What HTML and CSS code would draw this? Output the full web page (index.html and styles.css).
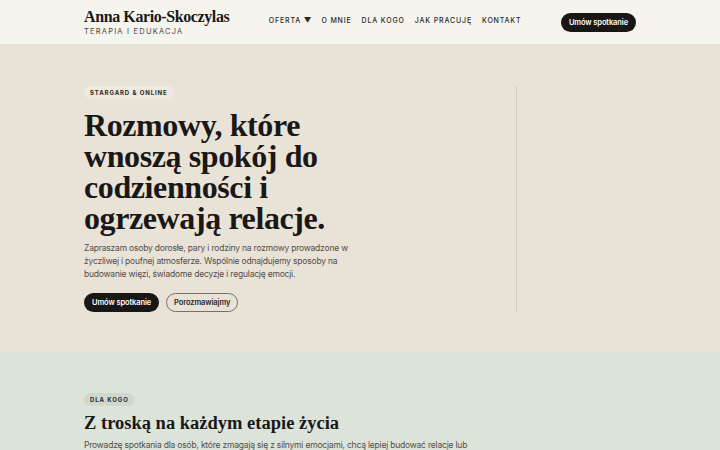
FILE: index.html
```html
<!DOCTYPE html>
<html lang="pl">
<head>
<meta charset="utf-8">
<title>Anna Kario-Skoczylas</title>
<link rel="stylesheet" href="styles.css">
</head>
<body>
<header class="site-header">
  <div class="container header-inner">
    <div class="brand">
      <div class="brand-name">Anna Kario-Skoczylas</div>
      <div class="brand-sub">TERAPIA I EDUKACJA</div>
    </div>
    <nav class="nav">
      <a href="#">OFERTA <span class="caret">▼</span></a>
      <a href="#">O MNIE</a>
      <a href="#">DLA KOGO</a>
      <a href="#">JAK PRACUJĘ</a>
      <a href="#">KONTAKT</a>
    </nav>
    <a class="btn btn-dark" href="#">Umów spotkanie</a>
  </div>
</header>
<section class="hero">
  <div class="container hero-grid">
    <div class="hero-text">
      <span class="badge">STARGARD &amp; ONLINE</span>
      <h1 class="hero-title">Rozmowy, które wnoszą spokój do codzienności i ogrzewają relacje.</h1>
      <p class="hero-lead">Zapraszam osoby dorosłe, pary i rodziny na rozmowy prowadzone w życzliwej i poufnej atmosferze. Wspólnie odnajdujemy sposoby na budowanie więzi, świadome decyzje i regulację emocji.</p>
      <div class="actions">
        <a class="btn btn-dark" href="#">Umów spotkanie</a>
        <a class="btn btn-outline" href="#">Porozmawiajmy</a>
      </div>
    </div>
    <div class="hero-side"></div>
  </div>
</section>
<section class="who">
  <div class="container who-inner">
    <span class="badge badge-green">DLA KOGO</span>
    <h2 class="section-title">Z troską na każdym etapie życia</h2>
    <p class="section-lead">Prowadzę spotkania dla osób, które zmagają się z silnymi emocjami, chcą lepiej budować relacje lub podejmują ważne decyzje życiowe.</p>
  </div>
</section>
</body>
</html>
```
FILE: styles.css
```css
* { box-sizing: border-box; }
html, body { margin: 0; padding: 0; }
body {
  font-family: Inter, "Noto Sans", sans-serif;
  color: #1c1a18;
  background: #dce4da;
}
a { text-decoration: none; color: inherit; white-space: nowrap; }
.container { width: 552px; margin: 0 auto; }

.site-header {
  background: #f6f4ef;
  border-bottom: 1px solid #e6e0d6;
  height: 45px;
}
.header-inner {
  display: flex;
  align-items: center;
  justify-content: space-between;
  height: 44px;
}
.brand { padding-top: 1px; white-space: nowrap; }
.brand-name {
  font-family: "Liberation Serif", serif;
  font-weight: 700;
  font-size: 16px;
  line-height: 18px;
  letter-spacing: -0.4px;
  color: #1a1816;
}
.brand-sub {
  font-size: 7.5px;
  letter-spacing: 1.2px;
  color: #4a4540;
  margin-top: 1px;
  line-height: 10px;
}
.nav {
  display: flex;
  gap: 10px;
  font-size: 7px;
  letter-spacing: 0.85px;
  color: #2a2724;
  font-weight: 500;
  margin-top: -4px;
}
.caret { font-size: 7.5px; letter-spacing: 0; }
.btn {
  display: inline-flex;
  align-items: center;
  justify-content: center;
  height: 19px;
  padding: 0 8px;
  border-radius: 10px;
  font-size: 7.5px;
  font-weight: 600;
  letter-spacing: -0.1px;
  flex-shrink: 0;
}
.btn-dark { background: #181716; color: #fff; }
.btn-outline { border: 1px solid #7a6f66; color: #2a2622; padding: 0 7px; }

.hero { background: #e9e2d7; }
.hero-grid {
  display: grid;
  grid-template-columns: 432px 1fr;
  padding: 41px 0 40px;
}
.hero-text {
  display: flex;
  flex-direction: column;
  align-items: flex-start;
}
.hero-side { border-left: 1px solid #d3c9bc; }
.badge {
  display: inline-block;
  font-size: 6px;
  font-weight: 700;
  letter-spacing: 0.9px;
  background: #efe9e0;
  color: #2a2724;
  padding: 3px 6px;
  border-radius: 7px;
  line-height: 7px;
}
.hero-title {
  font-family: "Liberation Serif", serif;
  font-weight: 700;
  font-size: 32px;
  line-height: 31px;
  margin: 11px 0 0;
  width: 260px;
  letter-spacing: -0.4px;
  color: #1a1816;
}
.hero-lead {
  font-size: 8.5px;
  letter-spacing: -0.2px;
  line-height: 13px;
  color: #524d47;
  width: 268px;
  margin: 8px 0 0;
}
.actions { display: flex; gap: 7px; margin-top: 12px; }

.who { padding: 41px 0 40px; }
.who-inner {
  display: flex;
  flex-direction: column;
  align-items: flex-start;
}
.badge-green { background: #cfd8cd; }
.section-title {
  font-family: "Liberation Serif", serif;
  font-weight: 700;
  font-size: 18.5px;
  line-height: 24px;
  margin: 5px 0 0;
  color: #1a1816;
}
.section-lead {
  font-size: 8.5px;
  letter-spacing: -0.2px;
  line-height: 13px;
  color: #524d47;
  margin: 4px 0 0;
  width: 400px;
}
```
